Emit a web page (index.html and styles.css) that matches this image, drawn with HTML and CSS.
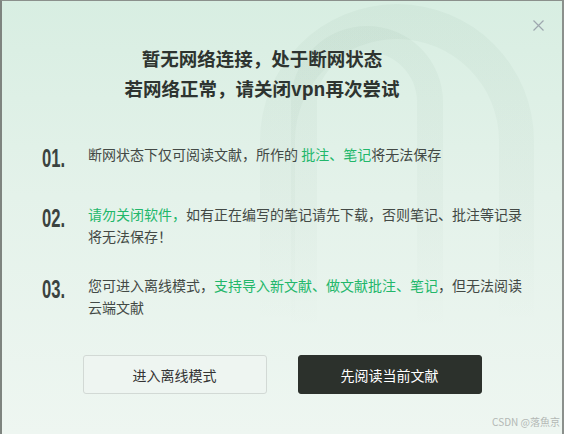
FILE: index.html
```html
<!DOCTYPE html>
<html lang="zh-CN">
<head>
    <meta charset="UTF-8">
    <title>断网提示</title>
    <link rel="stylesheet" href="styles.css">
</head>
<body>
    <div class="dialog">
        <svg class="bg-logo" width="564" height="434" viewBox="0 0 564 434">
            <defs>
                <linearGradient id="fade" x1="0" y1="0" x2="0" y2="1" gradientUnits="objectBoundingBox">
                    <stop offset="0" stop-color="#285a3c" stop-opacity="0.04" />
                    <stop offset="0.45" stop-color="#285a3c" stop-opacity="0.025" />
                    <stop offset="0.75" stop-color="#285a3c" stop-opacity="0" />
                </linearGradient>
            </defs>
            <path d="M260 434 V140 A137 137 0 0 1 534 140 V434 H499 V140 A102 102 0 0 0 295 140 V434 Z" />
            <path d="M291 434 V101 A76 76 0 0 1 443 101 V434 H417 V101 A50 50 0 0 0 317 101 V434 Z" />
        </svg>

        <svg class="close" width="11" height="11" viewBox="0 0 11 11">
            <path d="M0.5 0.5 L10.5 10.5 M10.5 0.5 L0.5 10.5" />
        </svg>

        <div class="title">
            <div>暂无网络连接，处于断网状态</div>
            <div>若网络正常，请关闭vpn再次尝试</div>
        </div>

        <div class="list">
            <div class="item">
                <div class="num"><span>01.</span></div>
                <div class="text">断网状态下仅可阅读文献，所作的 <em>批注、笔记</em>将无法保存</div>
            </div>
            <div class="item">
                <div class="num"><span>02.</span></div>
                <div class="text"><em>请勿关闭软件，</em>如有正在编写的笔记请先下载，否则笔记、批注等记录将无法保存！</div>
            </div>
            <div class="item">
                <div class="num"><span>03.</span></div>
                <div class="text">您可进入离线模式，<em>支持导入新文献、做文献批注、笔记</em>，但无法阅读云端文献</div>
            </div>
        </div>

        <div class="actions">
            <button class="btn">进入离线模式</button>
            <button class="btn btn-dark">先阅读当前文献</button>
        </div>

        <div class="credit">CSDN @落魚京</div>
    </div>
</body>
</html>
```

FILE: styles.css
```css
* {
    box-sizing: border-box;
}

body {
    margin: 0;
    font-family: "Noto Sans CJK SC", "Noto Sans", sans-serif;
}

.dialog {
    position: relative;
    width: 564px;
    height: 434px;
    overflow: hidden;
    border-top: 1px solid #8b908c;
    border-left: 2px solid #7e847f;
    border-right: 2px solid #8b908c;
    background: linear-gradient(180deg, #d8eee2 0%, #e4f2ea 45%, #eef6f1 100%);
    color: #434945;
}

.bg-logo {
    position: absolute;
    top: 0;
    left: -2px;
    fill: url(#fade);
}

.close {
    position: absolute;
    top: 19px;
    left: 531px;
    fill: none;
    stroke: #9ea7ae;
    stroke-width: 1.2;
}

.title {
    position: relative;
    margin-top: 42px;
    padding-right: 40px;
    text-align: center;
    font-size: 18.5px;
    line-height: 30px;
    font-weight: bold;
    color: #2e3430;
}

.list {
    position: relative;
    display: flex;
    flex-direction: column;
    gap: 27px;
    margin-top: 40px;
    padding-left: 40px;
}

.item {
    display: flex;
    align-items: flex-start;
}

.num {
    width: 46px;
    height: 33px;
    font-family: "Liberation Sans Narrow", "Liberation Sans", sans-serif;
    font-size: 26px;
    line-height: 30px;
    font-weight: bold;
    color: #3b433f;
}

.num span {
    display: inline-block;
    transform: scaleX(0.64);
    transform-origin: left center;
}

.text {
    width: 440px;
    font-size: 14px;
    line-height: 22px;
}

.text em {
    font-style: normal;
    color: #22b76a;
}

.actions {
    position: relative;
    display: flex;
    justify-content: center;
    gap: 31px;
    margin-top: 37px;
}

.btn {
    width: 184px;
    height: 39px;
    border: 1px solid #d2d9d5;
    border-radius: 3px;
    background: #eef5f1;
    font-family: inherit;
    font-size: 14px;
    color: #333;
    cursor: pointer;
}

.btn-dark {
    border-color: #2c312c;
    background: #2c312c;
    color: #fff;
}

.credit {
    position: absolute;
    right: 2px;
    bottom: 5px;
    font-size: 10px;
    color: #b3b8b5;
}
```
